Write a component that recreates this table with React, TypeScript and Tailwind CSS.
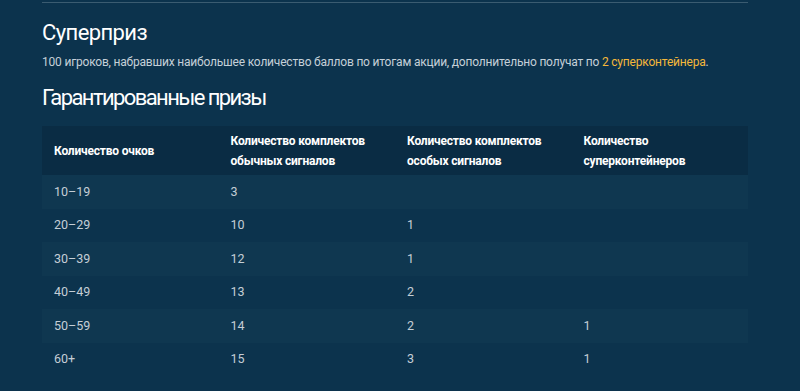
const rows = [
  ["10–19", "3", "", ""],
  ["20–29", "10", "1", ""],
  ["30–39", "12", "1", ""],
  ["40–49", "13", "2", ""],
  ["50–59", "14", "2", "1"],
  ["60+", "15", "3", "1"],
];

export default function App() {
  return (
    <div className="h-[391px] w-full overflow-hidden bg-[#0c334d] font-['Roboto',sans-serif]">
      <div className="ml-[42px] w-[706px] pt-[2px]">
        <div className="h-px bg-[#3b5c71]" />
        <h2 className="mt-[16px] text-[22px] leading-[27px] tracking-[-0.6px] text-white">Суперприз</h2>
        <p className="mt-[7px] whitespace-nowrap text-[12px] leading-[18px] tracking-[-0.2px] text-[#c5d0d8]">
          100 игроков, набравших наибольшее количество баллов по итогам акции, дополнительно получат по{" "}
          <span className="text-[#f5b83a]">2 суперконтейнера</span>.
        </p>
        <h2 className="mt-[13px] text-[22px] leading-[27px] tracking-[-1.6px] text-white">Гарантированные призы</h2>
        <table className="mt-[15px] w-full table-fixed border-collapse text-left">
          <thead>
            <tr className="h-[49px] bg-[#0a2c44]">
              <th className="px-3 text-[12px] font-bold leading-[20px] tracking-[-0.2px] text-white">Количество очков</th>
              <th className="px-3 text-[12px] font-bold leading-[20px] tracking-[-0.2px] text-white">Количество комплектов обычных сигналов</th>
              <th className="px-3 text-[12px] font-bold leading-[20px] tracking-[-0.2px] text-white">Количество комплектов особых сигналов</th>
              <th className="px-3 text-[12px] font-bold leading-[20px] tracking-[-0.2px] text-white">Количество суперконтейнеров</th>
            </tr>
          </thead>
          <tbody>
            {rows.map((r, i) => (
              <tr key={i} className={i % 2 === 0 ? "h-[34px] bg-[#0f3750]" : "h-[33px]"}>
                {r.map((c, j) => (
                  <td key={j} className="px-3 text-[12.5px] text-[#c5ced6]">{c}</td>
                ))}
              </tr>
            ))}
          </tbody>
        </table>
      </div>
    </div>
  );
}
